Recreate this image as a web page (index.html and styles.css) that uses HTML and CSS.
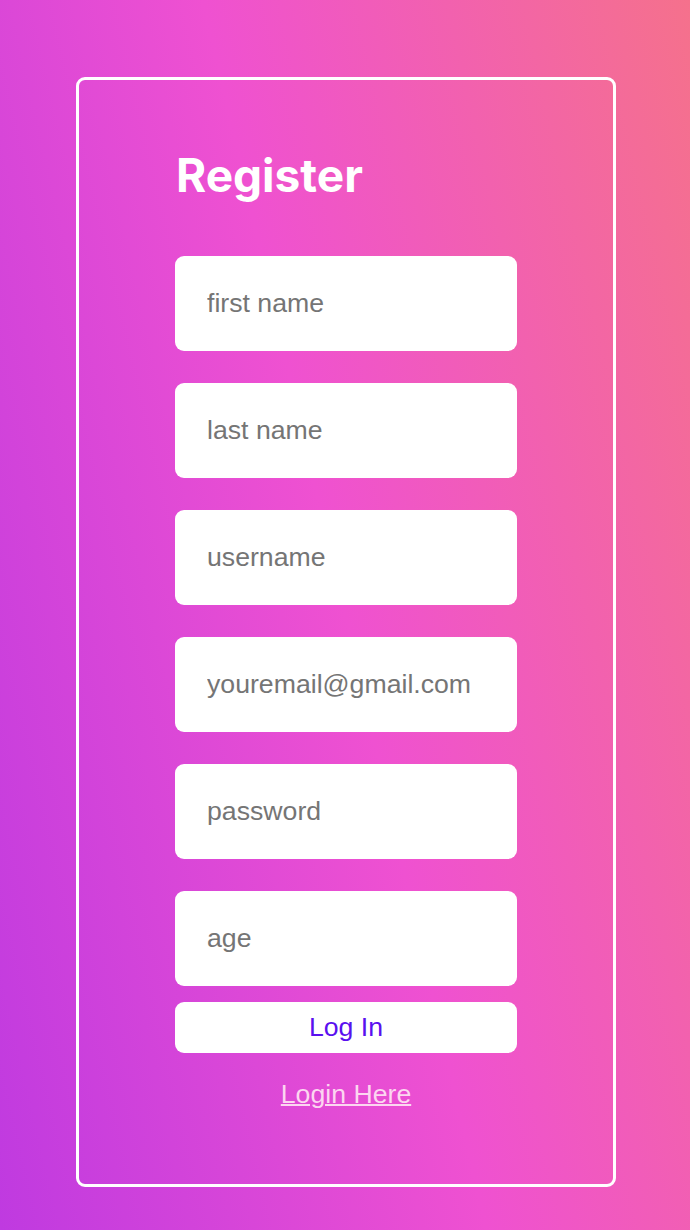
FILE: index.html
```html
<!DOCTYPE html>
<html lang="en">
<head>
<meta charset="utf-8">
<title>Register</title>
<link rel="stylesheet" href="styles.css">
</head>
<body>
<div class="page">
  <form class="card">
    <div class="column">
      <h1 class="title">Register</h1>
      <div class="fields">
        <input class="field" type="text" placeholder="first name">
        <input class="field" type="text" placeholder="last name">
        <input class="field" type="text" placeholder="username">
        <input class="field" type="email" placeholder="youremail@gmail.com">
        <input class="field" type="password" placeholder="password">
        <input class="field" type="text" placeholder="age">
      </div>
      <button class="submit" type="button">Log In</button>
      <a class="link" href="#">Login Here</a>
    </div>
  </form>
</div>
</body>
</html>
```
FILE: styles.css
```css
* { box-sizing: border-box; }
html, body { margin: 0; padding: 0; }
body {
  width: 690px;
  height: 1230px;
  overflow: hidden;
  font-family: "Liberation Sans", Arial, sans-serif;
  background: linear-gradient(77deg, #bf3ae0 0%, #ef51d1 50%, #f5718c 100%);
}
.page {
  padding-top: 77px;
  padding-left: 2px;
  display: flex;
  justify-content: center;
}
.card {
  width: 540px;
  height: 1110px;
  border: 3px solid #fff;
  border-radius: 9px;
  display: flex;
  justify-content: center;
  margin: 0;
}
.column {
  width: 342px;
  display: flex;
  flex-direction: column;
  padding-top: 70px;
}
.title {
  margin: 0 0 56px 1px;
  font-family: Inter, "Liberation Sans", sans-serif;
  font-weight: 700;
  font-size: 46px;
  line-height: 50px;
  color: #fff;
}
.fields {
  display: flex;
  flex-direction: column;
  gap: 32px;
}
.field {
  height: 95px;
  width: 100%;
  border: none;
  outline: none;
  border-radius: 9px;
  background: #fff;
  padding: 0 32px;
  font-family: "Liberation Sans", Arial, sans-serif;
  font-size: 26.67px;
  color: #333;
}
.field::placeholder { color: #757575; }
.submit {
  margin-top: 16px;
  height: 51px;
  width: 100%;
  border: none;
  border-radius: 9px;
  background: #fff;
  color: #5a10ef;
  font-family: "Liberation Sans", Arial, sans-serif;
  font-size: 26.67px;
  padding: 0;
}
.link {
  margin-top: 26px;
  align-self: center;
  font-size: 26.67px;
  line-height: 31px;
  color: #fcd6f0;
  text-decoration: underline;
  text-decoration-thickness: 2px;
}
```
